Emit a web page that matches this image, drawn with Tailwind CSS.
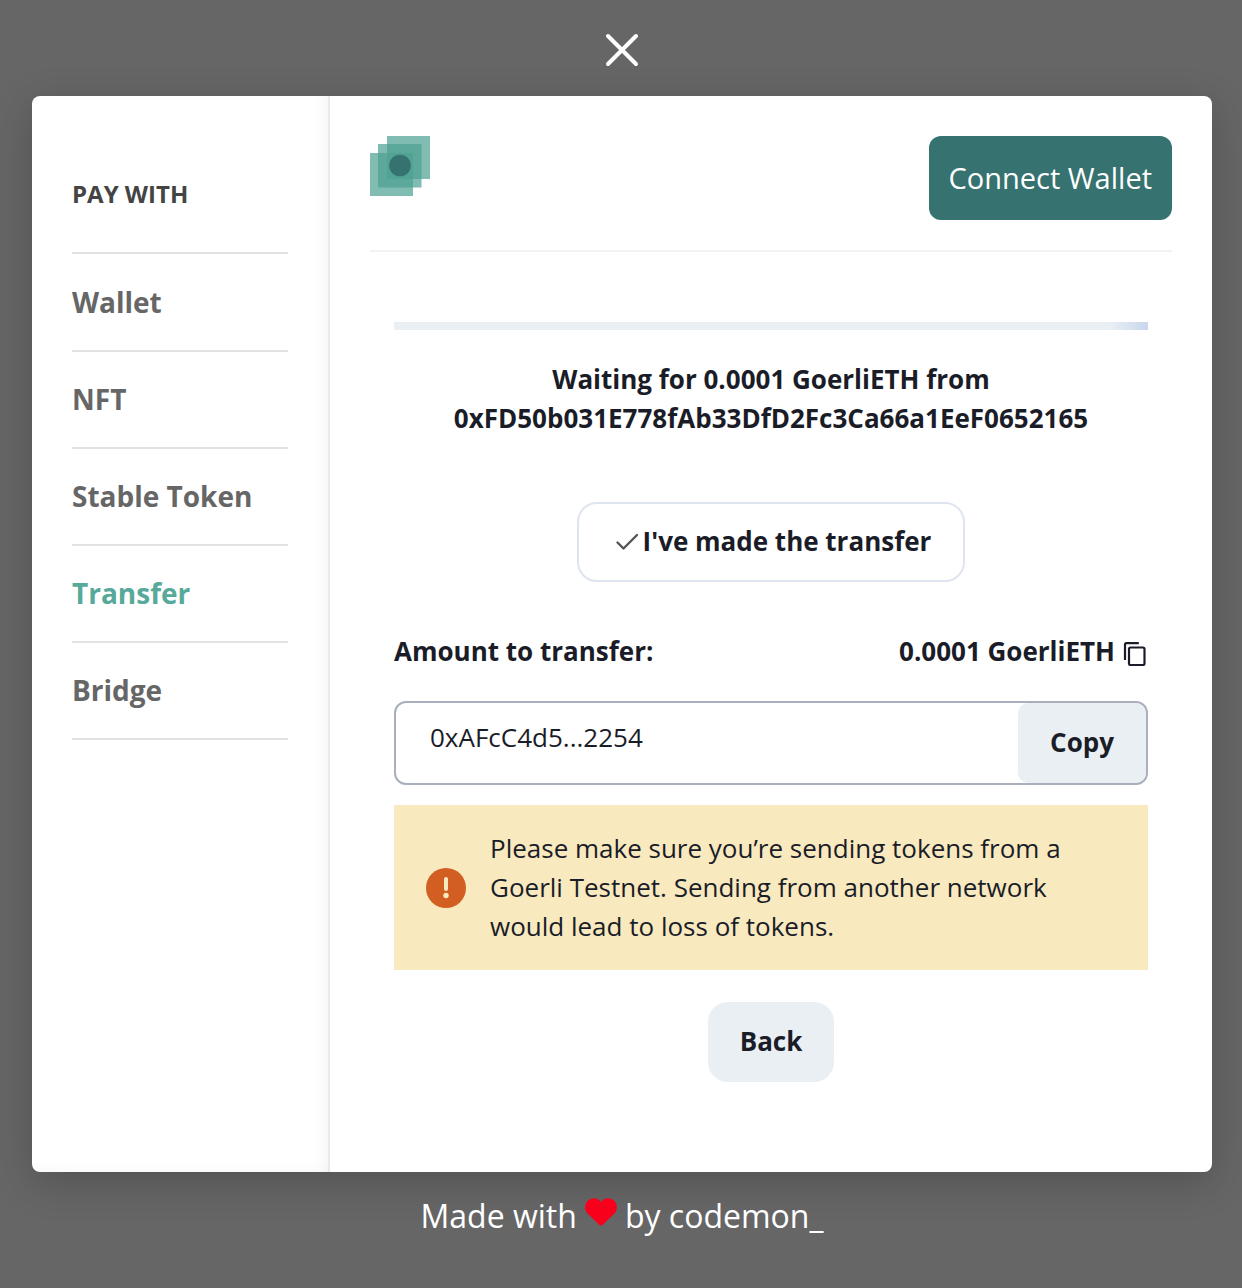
<!DOCTYPE html>
<html lang="en">
<head>
<meta charset="utf-8">
<meta name="viewport" content="width=device-width, initial-scale=1">
<title>Pay with transfer</title>
<script src="https://cdn.jsdelivr.net/npm/@tailwindcss/browser@4"></script>
</head>
<body class="min-h-screen bg-[#666666] font-['Open_Sans',sans-serif] text-[26px] leading-[39px] text-[#1a1d28]">
<div class="flex min-h-screen flex-col pr-[30px] pl-8">
  <div class="flex h-24 items-center justify-center pt-1">
    <button type="button" aria-label="Close" class="block">
      <svg class="size-9" viewBox="0 0 36 36" fill="none" stroke="#fff" stroke-width="4" stroke-linecap="round"><path d="M4 4l28 28M32 4L4 32"/></svg>
    </button>
  </div>

  <main class="flex min-h-[1076px] rounded-lg bg-white shadow-[0_10px_40px_rgba(0,0,0,0.2)]">
    <aside class="w-[298px] shrink-0 rounded-l-lg border-r-2 border-[#e9e9e9] px-10 pt-[76px] shadow-[inset_-10px_-6px_16px_-8px_rgba(0,0,0,0.05)]">
      <h2 class="box-content h-20 border-b-2 border-[#e2e2e2] text-2xl leading-[44px] font-bold text-[#444444]">PAY WITH</h2>
      <nav class="pt-px text-[28px] font-bold text-[#666666]">
        <a href="#" class="flex h-[97px] items-center border-b-2 border-[#e2e2e2]">Wallet</a>
        <a href="#" class="flex h-[97px] items-center border-b-2 border-[#e2e2e2]">NFT</a>
        <a href="#" class="flex h-[97px] items-center border-b-2 border-[#e2e2e2]">Stable Token</a>
        <a href="#" aria-current="page" class="flex h-[97px] items-center border-b-2 border-[#e2e2e2] text-[#57a99a]">Transfer</a>
        <a href="#" class="flex h-[97px] items-center border-b-2 border-[#e2e2e2]">Bridge</a>
      </nav>
    </aside>

    <section class="min-w-0 grow p-10">
      <header class="flex items-start justify-between border-b-2 border-[#f2f2f2] pb-[30px]">
        <svg class="size-[60px]" viewBox="0 0 60 60" role="img" aria-label="Logo">
          <g fill="#4da193" fill-opacity=".71">
            <path d="M17 0h43v43H17z"/><path d="M8 8h43.500v43.500H8z"/><path d="M0 17h43v43H0z"/>
          </g>
          <circle cx="30" cy="29.500" r="10.800" fill="#357270"/>
        </svg>
        <button type="button" class="h-[84px] rounded-xl bg-[#357270] px-5 pb-[2px] text-[29px] text-white">Connect Wallet</button>
      </header>

      <div class="flex flex-col px-6 pt-[70px]">
        <div class="h-2 bg-linear-to-r from-[#eaeff3] from-95% to-[#c9d6ee]"></div>
        <h1 class="mt-[30px] text-center font-bold">Waiting for 0.0001 GoerliETH from<br>0xFD50b031E778fAb33DfD2Fc3Ca66a1EeF0652165</h1>
        <button type="button" class="mt-16 flex h-20 items-center gap-1 self-center rounded-[20px] border-2 border-[#dfe5ee] pr-8 pb-[2px] pl-9 font-bold">
          <svg class="size-6" viewBox="0 0 24 24" fill="none" stroke="#555" stroke-width="2.400" stroke-linecap="round" stroke-linejoin="round"><path d="M2.500 13.500l6 6L22 6"/></svg>
          I've made the transfer
        </button>

        <div class="mt-[50px] flex items-center justify-between font-bold">
          <span>Amount to transfer:</span>
          <span class="flex items-center gap-2">0.0001 GoerliETH
            <button type="button" aria-label="Copy amount" class="pt-1">
              <svg class="h-6 w-[25px]" viewBox="0 0 25 24" fill="none" stroke="#1a1d28" stroke-width="2.200"><path d="M2 18V2.500q0-1.300 1.300-1.300h12.500"/><rect x="6" y="5.500" width="15.500" height="17.500" rx="1.500"/></svg>
            </button>
          </span>
        </div>

        <div class="mt-[30px] flex h-[84px] overflow-hidden rounded-xl border-2 border-[#a9afbc]">
          <input type="text" readonly aria-label="Transfer address" value="0xAFcC4d5...2254" class="min-w-0 grow pb-3 pl-[34px] outline-none">
          <button type="button" class="rounded-[10px] bg-[#eaeff3] px-8 pb-[2px] font-bold">Copy</button>
        </div>

        <div role="alert" class="mt-5 flex items-center gap-6 bg-[#f9e9bf] px-8 py-6">
          <svg class="size-10 shrink-0" viewBox="0 0 40 40"><circle cx="20" cy="20" r="20" fill="#d25e22"/><path d="M20 11v10" stroke="#f9e9bf" stroke-width="4" stroke-linecap="round"/><circle cx="20" cy="27.500" r="2.700" fill="#f9e9bf"/></svg>
          <p>Please make sure you’re sending tokens from a Goerli Testnet. Sending from another network would lead to loss of tokens.</p>
        </div>

        <button type="button" class="mt-8 h-20 self-center rounded-[20px] bg-[#eaeff3] px-8 pb-[2px] font-bold">Back</button>
      </div>
    </section>
  </main>

  <footer class="flex justify-center gap-2 pt-5 text-[32px] leading-[48px] text-white">
    <span>Made with</span>
    <svg class="mt-[5px] h-8 w-8" viewBox="1 0 32 32" role="img" aria-label="love"><path fill="#f8001c" d="M17 5C13-.5 7 .8 4 3.500C.2 7 .3 13 3.500 16.500L15.500 28q1.500 1.200 3 0L30.500 16.500C33.700 13 33.800 7 30 3.500C27 .8 21-.5 17 5z"/></svg>
    <span>by codemon_</span>
  </footer>
</div>
</body>
</html>
